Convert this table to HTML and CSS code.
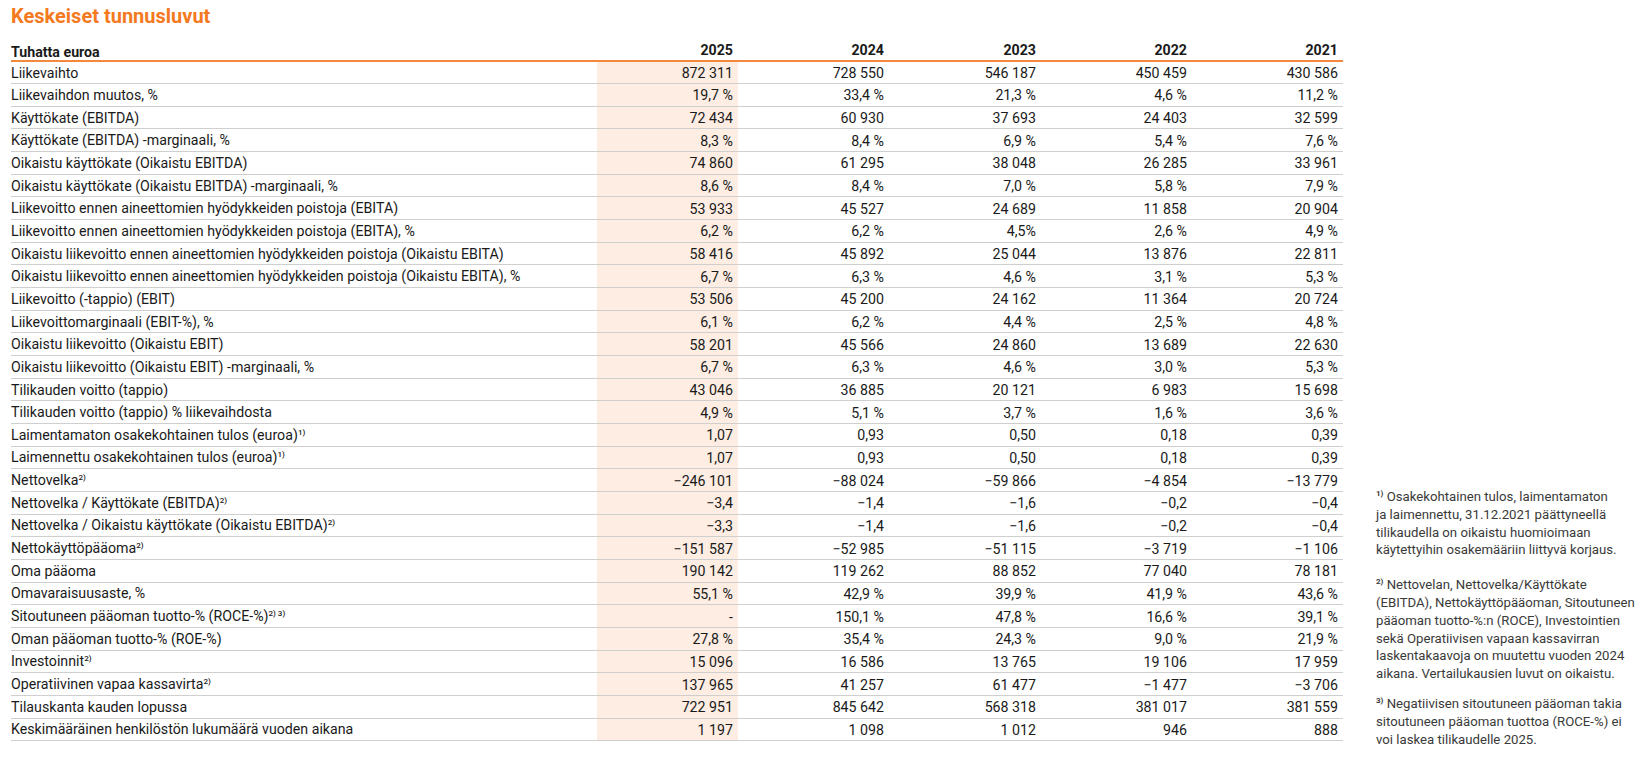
FILE: index.html
```html
<!DOCTYPE html>
<html lang="fi">
<head>
<meta charset="utf-8">
<title>Keskeiset tunnusluvut</title>
<link rel="stylesheet" href="styles.css">
</head>
<body>
<div class="page">
  <section class="main">
    <h1 class="title">Keskeiset tunnusluvut</h1>
    <table class="kpi">
      <colgroup>
        <col class="c-label"><col class="c-25"><col class="c-24"><col class="c-23"><col class="c-22"><col class="c-21">
      </colgroup>
      <thead>
        <tr><th class="lbl">Tuhatta euroa</th><th>2025</th><th>2024</th><th>2023</th><th>2022</th><th>2021</th></tr>
      </thead>
      <tbody>
        <tr><td class="lbl">Liikevaihto</td><td class="hl">872 311</td><td>728 550</td><td>546 187</td><td>450 459</td><td>430 586</td></tr>
        <tr><td class="lbl">Liikevaihdon muutos, %</td><td class="hl">19,7 %</td><td>33,4 %</td><td>21,3 %</td><td>4,6 %</td><td>11,2 %</td></tr>
        <tr><td class="lbl">Käyttökate (EBITDA)</td><td class="hl">72 434</td><td>60 930</td><td>37 693</td><td>24 403</td><td>32 599</td></tr>
        <tr><td class="lbl">Käyttökate (EBITDA) -marginaali, %</td><td class="hl">8,3 %</td><td>8,4 %</td><td>6,9 %</td><td>5,4 %</td><td>7,6 %</td></tr>
        <tr><td class="lbl">Oikaistu käyttökate (Oikaistu EBITDA)</td><td class="hl">74 860</td><td>61 295</td><td>38 048</td><td>26 285</td><td>33 961</td></tr>
        <tr><td class="lbl">Oikaistu käyttökate (Oikaistu EBITDA) -marginaali, %</td><td class="hl">8,6 %</td><td>8,4 %</td><td>7,0 %</td><td>5,8 %</td><td>7,9 %</td></tr>
        <tr><td class="lbl">Liikevoitto ennen aineettomien hyödykkeiden poistoja (EBITA)</td><td class="hl">53 933</td><td>45 527</td><td>24 689</td><td>11 858</td><td>20 904</td></tr>
        <tr><td class="lbl">Liikevoitto ennen aineettomien hyödykkeiden poistoja (EBITA), %</td><td class="hl">6,2 %</td><td>6,2 %</td><td>4,5%</td><td>2,6 %</td><td>4,9 %</td></tr>
        <tr><td class="lbl">Oikaistu liikevoitto ennen aineettomien hyödykkeiden poistoja (Oikaistu EBITA)</td><td class="hl">58 416</td><td>45 892</td><td>25 044</td><td>13 876</td><td>22 811</td></tr>
        <tr><td class="lbl">Oikaistu liikevoitto ennen aineettomien hyödykkeiden poistoja (Oikaistu EBITA), %</td><td class="hl">6,7 %</td><td>6,3 %</td><td>4,6 %</td><td>3,1 %</td><td>5,3 %</td></tr>
        <tr><td class="lbl">Liikevoitto (-tappio) (EBIT)</td><td class="hl">53 506</td><td>45 200</td><td>24 162</td><td>11 364</td><td>20 724</td></tr>
        <tr><td class="lbl">Liikevoittomarginaali (EBIT-%), %</td><td class="hl">6,1 %</td><td>6,2 %</td><td>4,4 %</td><td>2,5 %</td><td>4,8 %</td></tr>
        <tr><td class="lbl">Oikaistu liikevoitto (Oikaistu EBIT)</td><td class="hl">58 201</td><td>45 566</td><td>24 860</td><td>13 689</td><td>22 630</td></tr>
        <tr><td class="lbl">Oikaistu liikevoitto (Oikaistu EBIT) -marginaali, %</td><td class="hl">6,7 %</td><td>6,3 %</td><td>4,6 %</td><td>3,0 %</td><td>5,3 %</td></tr>
        <tr><td class="lbl">Tilikauden voitto (tappio)</td><td class="hl">43 046</td><td>36 885</td><td>20 121</td><td>6 983</td><td>15 698</td></tr>
        <tr><td class="lbl">Tilikauden voitto (tappio) % liikevaihdosta</td><td class="hl">4,9 %</td><td>5,1 %</td><td>3,7 %</td><td>1,6 %</td><td>3,6 %</td></tr>
        <tr><td class="lbl">Laimentamaton osakekohtainen tulos (euroa)<sup>1)</sup></td><td class="hl">1,07</td><td>0,93</td><td>0,50</td><td>0,18</td><td>0,39</td></tr>
        <tr><td class="lbl">Laimennettu osakekohtainen tulos (euroa)<sup>1)</sup></td><td class="hl">1,07</td><td>0,93</td><td>0,50</td><td>0,18</td><td>0,39</td></tr>
        <tr><td class="lbl">Nettovelka<sup>2)</sup></td><td class="hl">−246 101</td><td>−88 024</td><td>−59 866</td><td>−4 854</td><td>−13 779</td></tr>
        <tr><td class="lbl">Nettovelka / Käyttökate (EBITDA)<sup>2)</sup></td><td class="hl">−3,4</td><td>−1,4</td><td>−1,6</td><td>−0,2</td><td>−0,4</td></tr>
        <tr><td class="lbl">Nettovelka / Oikaistu käyttökate (Oikaistu EBITDA)<sup>2)</sup></td><td class="hl">−3,3</td><td>−1,4</td><td>−1,6</td><td>−0,2</td><td>−0,4</td></tr>
        <tr><td class="lbl">Nettokäyttöpääoma<sup>2)</sup></td><td class="hl">−151 587</td><td>−52 985</td><td>−51 115</td><td>−3 719</td><td>−1 106</td></tr>
        <tr><td class="lbl">Oma pääoma</td><td class="hl">190 142</td><td>119 262</td><td>88 852</td><td>77 040</td><td>78 181</td></tr>
        <tr><td class="lbl">Omavaraisuusaste, %</td><td class="hl">55,1 %</td><td>42,9 %</td><td>39,9 %</td><td>41,9 %</td><td>43,6 %</td></tr>
        <tr><td class="lbl">Sitoutuneen pääoman tuotto-% (ROCE-%)<sup>2) 3)</sup></td><td class="hl">-</td><td>150,1 %</td><td>47,8 %</td><td>16,6 %</td><td>39,1 %</td></tr>
        <tr><td class="lbl">Oman pääoman tuotto-% (ROE-%)</td><td class="hl">27,8 %</td><td>35,4 %</td><td>24,3 %</td><td>9,0 %</td><td>21,9 %</td></tr>
        <tr><td class="lbl">Investoinnit<sup>2)</sup></td><td class="hl">15 096</td><td>16 586</td><td>13 765</td><td>19 106</td><td>17 959</td></tr>
        <tr><td class="lbl">Operatiivinen vapaa kassavirta<sup>2)</sup></td><td class="hl">137 965</td><td>41 257</td><td>61 477</td><td>−1 477</td><td>−3 706</td></tr>
        <tr><td class="lbl">Tilauskanta kauden lopussa</td><td class="hl">722 951</td><td>845 642</td><td>568 318</td><td>381 017</td><td>381 559</td></tr>
        <tr><td class="lbl">Keskimääräinen henkilöstön lukumäärä vuoden aikana</td><td class="hl">1 197</td><td>1 098</td><td>1 012</td><td>946</td><td>888</td></tr>
      </tbody>
    </table>
  </section>
  <aside class="notes">
    <p class="note n1"><sup>1)</sup> Osakekohtainen tulos, laimentamaton<br>ja laimennettu, 31.12.2021 päättyneellä tilikaudella on oikaistu huomioimaan käytettyihin osakemääriin liittyvä korjaus.</p>
    <p class="note n2"><sup>2)</sup> Nettovelan, Nettovelka/Käyttökate (EBITDA), Nettokäyttöpääoman, Sitoutuneen pääoman tuotto-%:n (ROCE), Investointien sekä Operatiivisen vapaan kassavirran laskentakaavoja on muutettu vuoden 2024 aikana. Vertailukausien luvut on oikaistu.</p>
    <p class="note n3"><sup>3)</sup> Negatiivisen sitoutuneen pääoman takia sitoutuneen pääoman tuottoa (ROCE-%) ei voi laskea tilikaudelle 2025.</p>
  </aside>
</div>
</body>
</html>
```

FILE: styles.css
```css
* { box-sizing: border-box; }

html, body {
  margin: 0;
  padding: 0;
  background: #ffffff;
}

body {
  font-family: Roboto, "Liberation Sans", Arial, sans-serif;
  color: #1a1a1a;
}

.page {
  display: flex;
  align-items: flex-start;
  padding-left: 11px;
}

.main {
  width: 1332px;
  flex: 0 0 1332px;
}

.title {
  margin: 0;
  padding-top: 4px;
  height: 38px;
  font-size: 20px;
  line-height: 24px;
  font-weight: 700;
  color: #f47a1f;
}

.kpi {
  width: 1332px;
  table-layout: fixed;
  border-collapse: collapse;
  font-size: 14.2px;
}

.c-label { width: 586px; }
.c-25 { width: 141px; }
.c-24 { width: 151px; }
.c-23 { width: 152px; }
.c-22 { width: 151px; }
.c-21 { width: 151px; }

.kpi th,
.kpi td {
  padding: 0 5px 0 0;
  text-align: right;
  white-space: nowrap;
  line-height: 16px;
}

.kpi th.lbl,
.kpi td.lbl {
  text-align: left;
  padding: 0;
}

.kpi thead tr {
  height: 23px;
  border-bottom: 2px solid #f3893f;
}

.kpi th {
  font-weight: 700;
  vertical-align: bottom;
  padding-bottom: 2px;
}

.kpi tbody tr {
  height: 22.67px;
  border-bottom: 1px solid #cfcfcf;
}

.kpi td {
  vertical-align: middle;
  padding-top: 1px;
}

.kpi td.hl {
  background: #fdede3;
}

.kpi sup {
  font-size: 8px;
  line-height: 0;
  vertical-align: 5px;
  font-weight: 500;
}

.notes {
  flex: 1 1 auto;
  min-width: 0;
  margin-left: 33px;
  padding-top: 488px;
  color: #3a3a3a;
  font-size: 13.2px;
  line-height: 17.8px;
}

.note {
  margin: 0;
}

.n2 { margin-top: 17px; }
.n3 { margin-top: 12px; }

.note sup {
  font-size: 8px;
  font-weight: 700;
  line-height: 0;
  vertical-align: 5px;
}
```
